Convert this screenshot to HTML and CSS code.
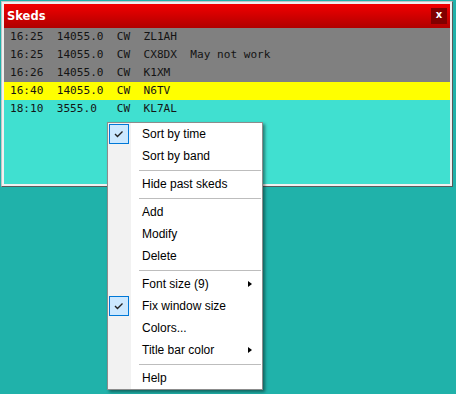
FILE: index.html
```html
<!DOCTYPE html>
<html>
<head>
  <title>Skeds</title>
  <link rel="stylesheet" href="styles.css">
</head>
<body>
  <!-- Skeds window -->
  <div class="window">
    <div class="title-bar">
      <span class="title">Skeds</span>
      <span class="close">x</span>
    </div>
    <div class="sked-list">
      <div class="sked past">16:25  14055.0  CW  ZL1AH</div>
      <div class="sked past">16:25  14055.0  CW  CX8DX  May not work</div>
      <div class="sked past">16:26  14055.0  CW  K1XM</div>
      <div class="sked next">16:40  14055.0  CW  N6TV</div>
      <div class="sked">18:10  3555.0   CW  KL7AL</div>
    </div>
  </div>

  <!-- Context menu -->
  <div class="menu">
    <div class="menu-item checked"><span class="check"><svg width="20" height="20" viewBox="0 0 20 20"><path d="M6 10 L8.5 12.5 L13.5 7.5" fill="none" stroke="#222" stroke-width="1.4"/></svg></span>Sort by time</div>
    <div class="menu-item">Sort by band</div>
    <div class="separator"></div>
    <div class="menu-item">Hide past skeds</div>
    <div class="separator"></div>
    <div class="menu-item">Add</div>
    <div class="menu-item">Modify</div>
    <div class="menu-item">Delete</div>
    <div class="separator"></div>
    <div class="menu-item">Font size (9)<span class="arrow"></span></div>
    <div class="menu-item checked"><span class="check"><svg width="20" height="20" viewBox="0 0 20 20"><path d="M6 10 L8.5 12.5 L13.5 7.5" fill="none" stroke="#222" stroke-width="1.4"/></svg></span>Fix window size</div>
    <div class="menu-item">Colors...</div>
    <div class="menu-item">Title bar color<span class="arrow"></span></div>
    <div class="separator"></div>
    <div class="menu-item">Help</div>
  </div>
</body>
</html>
```

FILE: styles.css
```css
body {
  margin: 0;
  background: #20b2aa;
  font-family: "Liberation Sans", Arial, sans-serif;
  height: 394px;
  overflow: hidden;
}

.window {
  margin: 1px 0 0 1px;
  width: 452px;
  height: 186px;
  box-sizing: border-box;
  border: 1px solid;
  border-color: #c4c4c4 #5a5a5a #5a5a5a #c4c4c4;
  padding: 2px;
  background: #f0f0f0;
  display: flex;
  flex-direction: column;
}

.title-bar {
  height: 24px;
  flex: 0 0 24px;
  background: linear-gradient(to bottom, #f20000, #b00000);
  display: flex;
  align-items: center;
  padding: 0 3px 0 3px;
}

.title {
  font-family: "DejaVu Sans", sans-serif;
  font-weight: bold;
  font-size: 11.5px;
  color: white;
  flex-grow: 1;
}

.close {
  width: 16px;
  height: 16px;
  background: #800000;
  color: white;
  font-family: "DejaVu Sans", sans-serif;
  font-weight: bold;
  font-size: 10px;
  line-height: 14px;
  text-align: center;
}

.sked-list {
  flex-grow: 1;
  background: #40e0d0;
}

.sked {
  height: 18px;
  line-height: 18px;
  padding-left: 6px;
  font-family: "DejaVu Sans Mono", monospace;
  font-size: 11.1px;
  color: #141414;
  white-space: pre;
}

.sked.past {
  background: #808080;
}

.sked.next {
  background: #ffff00;
}

.menu {
  position: absolute;
  left: 107px;
  top: 122px;
  width: 156px;
  box-sizing: border-box;
  border: 1px solid #8c8c8c;
  background: linear-gradient(to right, #f2f2f2 0, #f2f2f2 23px, #fff 23px);
  box-shadow: 2px 2px 3px rgba(0, 0, 0, 0.45);
  font-size: 12px;
  color: #000;
}

.menu-item {
  height: 22px;
  display: flex;
  align-items: center;
  padding-left: 34px;
  position: relative;
}

.check {
  position: absolute;
  left: 1px;
  top: 1px;
  width: 20px;
  height: 20px;
  box-sizing: border-box;
  border: 1px solid #0078d7;
  background: #cce8ff;
}

.check svg {
  display: block;
  margin: -1px;
}

.arrow {
  margin-left: auto;
  margin-right: 10px;
  width: 0;
  height: 0;
  border-top: 3.5px solid transparent;
  border-bottom: 3.5px solid transparent;
  border-left: 4px solid #000;
}

.separator {
  height: 1px;
  margin: 3px 1px 2px 31px;
  background: #bdbdbd;
}
```
